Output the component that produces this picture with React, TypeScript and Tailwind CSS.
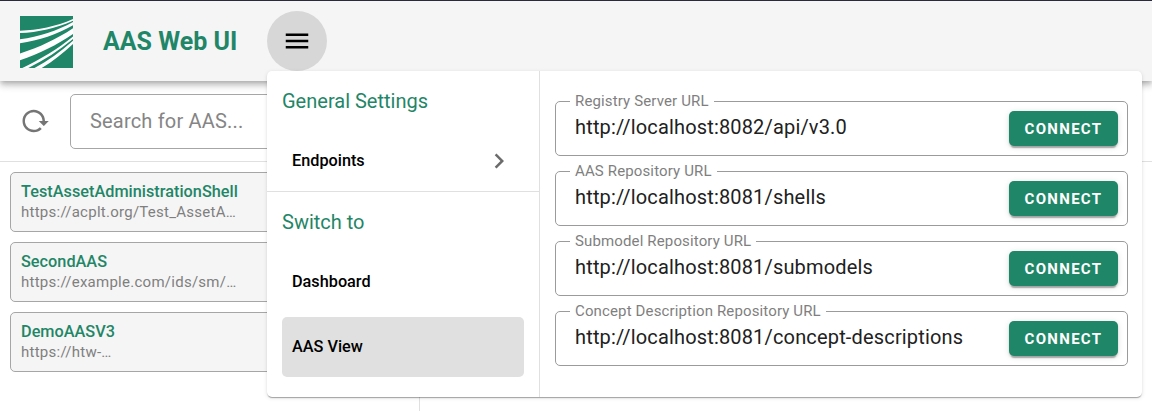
import React from "react";

const shells = [
  { name: "TestAssetAdministrationShell", url: "https://acplt.org/Test_AssetA…" },
  { name: "SecondAAS", url: "https://example.com/ids/sm/…" },
  { name: "DemoAASV3", url: "https://htw-…" },
];

const endpoints = [
  { label: "Registry Server URL", value: "http://localhost:8082/api/v3.0" },
  { label: "AAS Repository URL", value: "http://localhost:8081/shells" },
  { label: "Submodel Repository URL", value: "http://localhost:8081/submodels" },
  { label: "Concept Description Repository URL", value: "http://localhost:8081/concept-descriptions" },
];

function Icon({ d, className }: { d: string; className?: string }) {
  return (
    <svg viewBox="0 0 24 24" className={`h-[30px] w-[30px] shrink-0 fill-current ${className ?? ""}`}>
      <path d={d} />
    </svg>
  );
}

const RELOAD =
  "M2 12C2 16.97 6.03 21 11 21C13.39 21 15.68 20.06 17.4 18.4L15.9 16.9C14.63 18.25 12.86 19 11 19C4.76 19 1.64 11.46 6.05 7.05C10.46 2.64 18 5.77 18 12H15L19 16H19.1L23 12H20C20 7.03 15.97 3 11 3C6.03 3 2 7.03 2 12Z";
const MENU = "M3,6H21V8H3V6M3,11H21V13H3V11M3,16H21V18H3V16Z";
const CHEVRON = "M8.59,16.58L13.17,12L8.59,7.41L10,6L16,12L10,18L8.59,16.58Z";

function Logo() {
  return (
    <svg viewBox="0 0 53 52" className="mt-px h-[52px] w-[53px] shrink-0">
      <rect width="53" height="52" fill="#1f8667" />
      <g fill="#fff">
        <path d="M0 14.7C18 14.2 36 10.5 53 3V4.7C36 12.2 18 16.4 0 17Z" />
        <path d="M0 23.3C19 20.6 37 14.8 53 6V9.2C37 18.3 19 24.6 0 27.2Z" />
        <path d="M0 37.5C19 31.5 37 23 53 12.3V18C37 28.8 19 38 0 44.3Z" />
        <path d="M2.3 52C20 43.5 38 33 53 20.5V23C39 34.5 24 44.2 8.3 52Z" />
        <path d="M14.5 52C28 44.5 41 35.5 53 24.7V28C43.5 37 33 45.2 21.7 52Z" />
      </g>
    </svg>
  );
}

function EndpointField({ label, value }: { label: string; value: string }) {
  return (
    <div className="relative flex h-[55px] items-center justify-between rounded-[5px] border border-[#9b9b9b] pr-[9px] pl-[19px]">
      <span className="absolute -top-[11px] left-[14px] bg-white px-[5px] text-[15px] leading-5 tracking-[0.14px] text-[#7f7f7f]">
        {label}
      </span>
      <span className="-mt-[3px] text-[20px] leading-[30px] tracking-[0.165px] text-[#212121]">{value}</span>
      <button className="h-[35px] w-[109px] rounded-[5px] bg-[#1f8667] pt-px text-[15px] font-bold tracking-[1.3px] text-white shadow-[0_4px_1px_-2px_rgba(0,0,0,0.2),0_2px_2px_0_rgba(0,0,0,0.14),0_1px_6px_0_rgba(0,0,0,0.12)]">
        CONNECT
      </button>
    </div>
  );
}

export default function App() {
  return (
    <div className="relative flex h-[411px] w-[1152px] flex-col overflow-hidden bg-white font-['Roboto',sans-serif]">
      <header className="z-10 flex h-[81px] shrink-0 items-center border-t border-[#2b2a3d] bg-[#f5f5f5] pl-5 shadow-[0_2px_5px_-1px_rgba(0,0,0,0.2),0_5px_6px_0_rgba(0,0,0,0.14),0_1px_12px_0_rgba(0,0,0,0.12)]">
        <Logo />
        <h1 className="mt-[2px] ml-[30px] w-[164px] text-[25px] leading-10 font-bold whitespace-nowrap text-[#1f8667]">
          AAS Web UI
        </h1>
        <button className="flex h-[60px] w-[60px] items-center justify-center rounded-full bg-[#d7d7d7] text-black">
          <Icon d={MENU} />
        </button>
      </header>

      <div className="flex min-h-0 flex-1">
        <aside className="flex w-[420px] shrink-0 flex-col border-r border-[#e0e0e0]">
          <div className="flex h-[81px] shrink-0 items-center border-b border-[#e0e0e0] pl-5">
            <Icon d={RELOAD} className="text-[#757575]" />
            <div className="ml-5 flex h-[55px] w-[335px] items-center rounded-[5px] border border-[#a6a6a6] pl-[19px] text-[20px] tracking-[0.1875px] text-[#858585]">
              Search for AAS...
            </div>
          </div>
          <ul className="flex flex-col gap-[10px] px-[10px] pt-[10px]">
            {shells.map((s) => (
              <li key={s.name} className="h-[60px] rounded-[5px] border border-[#a6a6a6] bg-[#f5f5f5] px-[10px] pt-[9px]">
                <div className="text-[16.25px] leading-[20px] font-medium tracking-[0.02px] text-[#1f8667]">{s.name}</div>
                <div className="text-[15px] leading-5 tracking-[0.26px] text-[#7f7f7f]">{s.url}</div>
              </li>
            ))}
          </ul>
        </aside>
        <main className="h-[81px] flex-1 border-b border-[#e0e0e0]" />
      </div>

      <div className="absolute top-[71px] left-[267px] z-20 flex h-[326px] w-[875px] rounded-[5px] bg-white shadow-[0_2px_1px_-1px_rgba(0,0,0,0.2),0_1px_1px_0_rgba(0,0,0,0.14),0_1px_4px_0_rgba(0,0,0,0.12)]">
        <nav className="flex w-[273px] shrink-0 flex-col border-r border-[#e0e0e0]">
          <section className="h-[121px] border-b border-[#e0e0e0] px-[15px]">
            <h2 className="h-[60px] text-[20px] leading-[60px] text-[#1f8667]">General Settings</h2>
            <div className="flex h-[60px] items-center justify-between px-[10px] text-[16.25px] font-medium text-black">
              Endpoints
              <Icon d={CHEVRON} className="text-[#6b6b6b]" />
            </div>
          </section>
          <section className="px-[15px]">
            <h2 className="h-[60px] text-[20px] leading-[60px] text-[#1f8667]">Switch to</h2>
            <div className="flex h-[60px] items-center px-[10px] text-[16.25px] font-medium text-black">Dashboard</div>
            <div className="mt-[5px] flex h-[60px] items-center rounded-[5px] bg-[#e0e0e0] px-[10px] text-[16.25px] font-medium text-black">
              AAS View
            </div>
          </section>
        </nav>
        <div className="flex flex-1 flex-col gap-[15px] pt-[30px] pr-[14px] pl-[15px]">
          {endpoints.map((e) => (
            <EndpointField key={e.label} label={e.label} value={e.value} />
          ))}
        </div>
      </div>
    </div>
  );
}
